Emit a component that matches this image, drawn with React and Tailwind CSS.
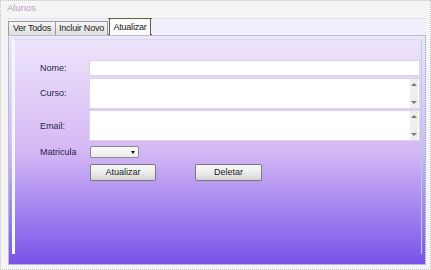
export default function App() {
  const font = { fontFamily: '"Liberation Sans", Arial, sans-serif' };

  const ScrollArrows = () => (
    <div className="flex flex-col items-center justify-between w-[8px] h-full py-[4px] mr-[1px] bg-[#eeeeee]">
      <div className="w-0 h-0 border-l-[3px] border-r-[3px] border-b-[3px] border-l-transparent border-r-transparent border-b-[#777]" />
      <div className="w-0 h-0 border-l-[3px] border-r-[3px] border-t-[3px] border-l-transparent border-r-transparent border-t-[#777]" />
    </div>
  );

  return (
    <div
      className="w-[431px] h-[270px] bg-[#f4f4f4] border border-dotted border-[#c4c4c4] overflow-hidden flex flex-col text-[9px] leading-none whitespace-nowrap text-[#262646]"
      style={font}
    >
      {/* title */}
      <div className="h-[17px] pl-[6px] pt-[2px] text-[#b4a4b8] text-[9.5px]">Alunos</div>

      {/* tab control */}
      <div className="ml-[7px] w-[418px] flex flex-col">
        <div className="relative h-[17px] flex items-end bg-[#f2eefc] border-t border-dotted border-[#b8e0e8]">
          <div className="h-[14px] w-[48px] flex items-center justify-center bg-gradient-to-b from-[#f6f6f6] to-[#dedede] border border-b-0 border-[#9a9a9a] text-[#222] tracking-[-0.2px]">
            Ver Todos
          </div>
          <div className="h-[14px] w-[52px] flex items-center justify-center bg-gradient-to-b from-[#f6f6f6] to-[#dedede] border border-l-0 border-b-0 border-[#9a9a9a] text-[#222] tracking-[-0.2px]">
            Incluir Novo
          </div>
          <div className="relative ml-[1px] h-[17px] w-[42px] flex items-center justify-center bg-[#fbfbfb] border border-b-0 border-[#6a5a40] text-[#222] tracking-[-0.2px]">
            Atualizar
            <div className="absolute -left-[2px] -top-[1px] w-[2px] h-[1px] bg-[#6a5a40]" />
            <div className="absolute -right-[2px] -top-[1px] w-[2px] h-[1px] bg-[#6a5a40]" />
            <div className="absolute -left-[2px] bottom-0 w-[2px] h-[1px] bg-[#6a5a40]" />
            <div className="absolute -right-[2px] bottom-0 w-[2px] h-[1px] bg-[#6a5a40]" />
          </div>
        </div>

        {/* content panel */}
        <div className="h-[230px] border border-[#b4bcd4] bg-gradient-to-b from-[#eee6fb] via-[#d6b8f4] to-[#7a50e8] p-[3px] pb-[10px]">
          <div className="h-full border-l-[3px] border-l-[#eefafa] border-r border-r-[#a8d4e4] border-t border-t-[#d4dcf2] pl-[25px] pt-[20px] flex flex-col">
            {/* Nome */}
            <div className="flex items-center h-[16px]">
              <div className="w-[49px]">Nome:</div>
              <div className="w-[331px] h-full bg-white border border-[#dcd4ec]" />
            </div>
            {/* Curso */}
            <div className="flex items-center h-[31px] mt-[2px]">
              <div className="w-[49px]">Curso:</div>
              <div className="w-[331px] h-full bg-white border border-[#dcd4ec] flex justify-end">
                <ScrollArrows />
              </div>
            </div>
            {/* Email */}
            <div className="flex items-center h-[31px] mt-[1px]">
              <div className="w-[49px] pt-[2px]">Email:</div>
              <div className="w-[331px] h-full bg-white border border-[#dcd4ec] flex justify-end">
                <ScrollArrows />
              </div>
            </div>
            {/* Matricula */}
            <div className="flex items-center h-[12px] mt-[5px]">
              <div className="w-[50px]">Matricula</div>
              <div className="w-[49px] h-full bg-gradient-to-b from-[#fafafa] to-[#ececec] border border-[#8a8a8a] rounded-[2px] flex items-center justify-end pr-[3px]">
                <div className="w-0 h-0 border-l-[2px] border-r-[2px] border-t-[3px] border-l-transparent border-r-transparent border-t-[#111]" />
              </div>
            </div>
            {/* buttons */}
            <div className="flex h-[17px] mt-[6px] ml-[50px] gap-[39px]">
              <button className="w-[66px] h-full bg-gradient-to-b from-[#f8f8f8] via-[#ececec] to-[#d4d4d4] border border-[#7a7a7a] rounded-[2px] text-[#222]">
                Atualizar
              </button>
              <button className="w-[67px] h-full bg-gradient-to-b from-[#f8f8f8] via-[#ececec] to-[#d4d4d4] border border-[#7a7a7a] rounded-[2px] text-[#222]">
                Deletar
              </button>
            </div>
          </div>
        </div>
      </div>
    </div>
  );
}
